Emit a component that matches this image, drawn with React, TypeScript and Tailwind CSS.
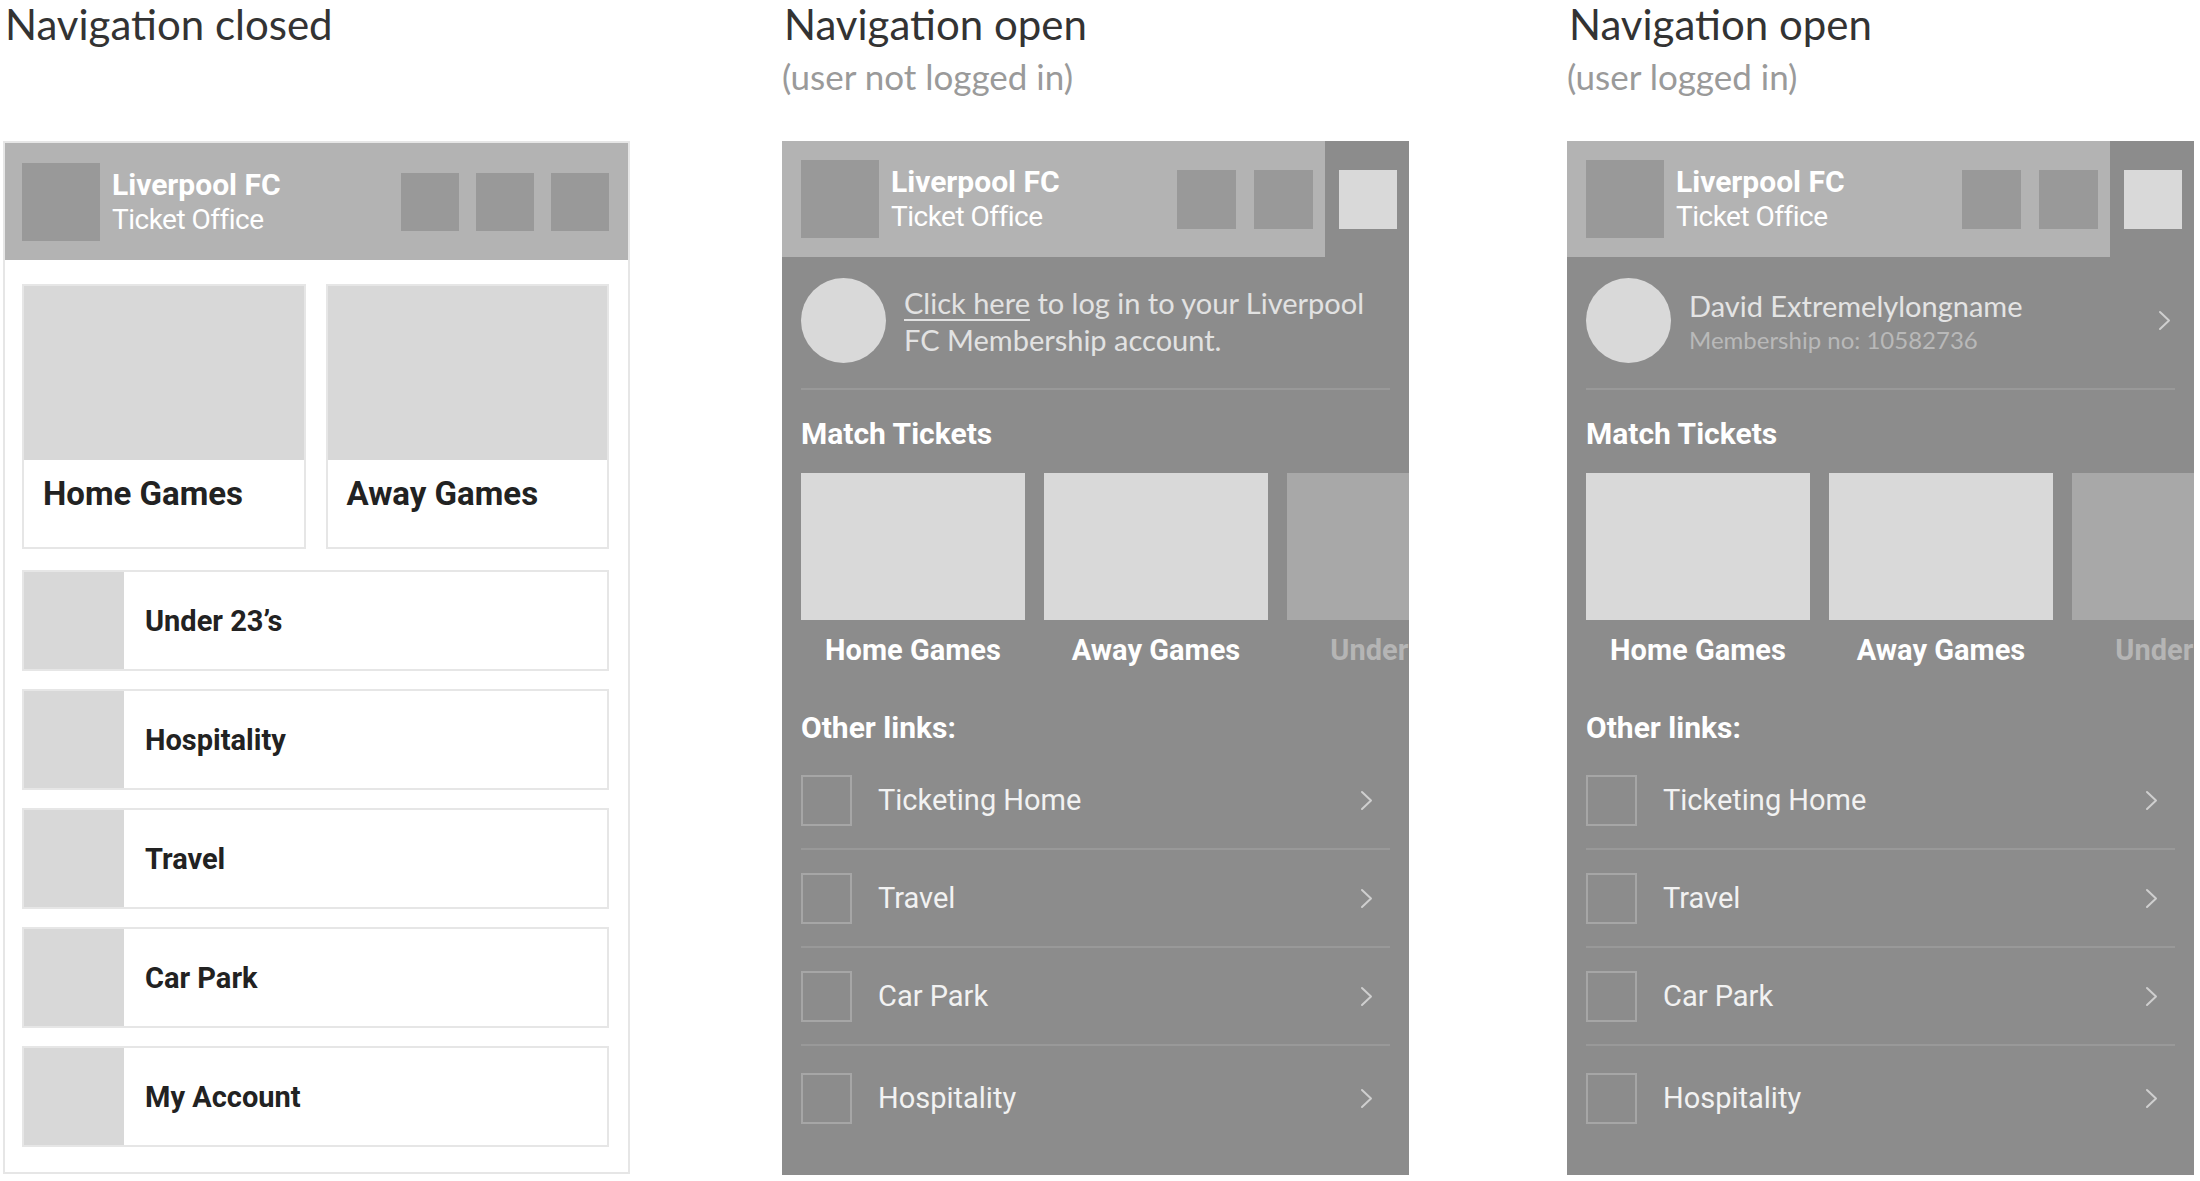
import React from "react";

const quickLinks = ["Under 23’s", "Hospitality", "Travel", "Car Park", "My Account"];
const otherLinks = ["Ticketing Home", "Travel", "Car Park", "Hospitality"];
const matchCards = [
  { label: "Home Games", faded: false },
  { label: "Away Games", faded: false },
  { label: "Under 23’s", faded: true },
];

const ui = "font-['Roboto','Liberation_Sans',sans-serif]";
const soft = "font-['Lato','Noto_Sans',sans-serif]";

const Chevron = () => (
  <svg width="13" height="21" viewBox="0 0 13 21" fill="none" className="text-[#cfcfcf]">
    <path
      d="M2 2l9 8.5L2 19"
      stroke="currentColor"
      strokeWidth="2"
      strokeLinecap="round"
      strokeLinejoin="round"
    />
  </svg>
);

const Title = ({ title, sub }: { title: string; sub?: string }) => (
  <div className={`${soft} h-[141px] pt-[3px]`}>
    <div className="text-[42px] leading-none text-[#333] pl-[2px]">{title}</div>
    {sub && <div className="mt-[14px] text-[35px] leading-none text-[#9a9a9a]">{sub}</div>}
  </div>
);

const Brand = () => (
  <>
    <div className="w-[78px] h-[78px] bg-[#999] shrink-0" />
    <div className={`${ui} ml-[12px] text-white leading-[35px]`}>
      <div className="text-[30px] font-bold">Liverpool FC</div>
      <div className="text-[28px] tracking-[-0.5px]">Ticket Office</div>
    </div>
  </>
);

const ClosedPanel = () => (
  <div className="h-[1033px] border-2 border-[#e6e6e6] bg-white">
    <div className="h-[117px] bg-[#b3b3b3] flex items-center pl-[17px] pr-[19px]">
      <Brand />
      <div className="flex-1" />
      <div className="flex gap-[17px]">
        <div className="w-[58px] h-[58px] bg-[#999]" />
        <div className="w-[58px] h-[58px] bg-[#999]" />
        <div className="w-[58px] h-[58px] bg-[#999]" />
      </div>
    </div>
    <div className={`${ui} pl-[17px] pr-[19px] pt-[24px]`}>
      <div className="grid grid-cols-2 gap-[20px]">
        {["Home Games", "Away Games"].map((t) => (
          <div key={t} className="h-[265px] border-2 border-[#e6e6e6] flex flex-col">
            <div className="h-[174px] bg-[#d8d8d8]" />
            <div className="pt-[15px] pl-[19px] text-[33px] leading-[38px] font-bold text-[#222]">{t}</div>
          </div>
        ))}
      </div>
      <div className="mt-[21px] flex flex-col gap-[18px]">
        {quickLinks.map((t) => (
          <div key={t} className="h-[101px] border-2 border-[#e6e6e6] flex items-center">
            <div className="w-[100px] self-stretch bg-[#d8d8d8]" />
            <div className="pl-[21px] text-[29px] leading-[34px] font-bold text-[#222]">{t}</div>
          </div>
        ))}
      </div>
    </div>
  </div>
);

const OpenPanel = ({ loggedIn }: { loggedIn: boolean }) => (
  <div className="h-[1034px] bg-[#8c8c8c] overflow-hidden">
    <div className="h-[116px] flex">
      <div className="w-[543px] bg-[#b3b3b3] flex items-center pl-[19px] pr-[12px]">
        <Brand />
        <div className="flex-1" />
        <div className="flex gap-[18px]">
          <div className="w-[59px] h-[59px] bg-[#999]" />
          <div className="w-[59px] h-[59px] bg-[#999]" />
        </div>
      </div>
      <div className="flex-1 flex items-center pl-[14px]">
        <div className="w-[58px] h-[59px] bg-[#d9d9d9]" />
      </div>
    </div>

    <div className="px-[19px]">
      <div className="pt-[21px] pb-[25px] border-b-2 border-[#999] flex items-center">
        <div className="w-[85px] h-[85px] rounded-full bg-[#d9d9d9] shrink-0" />
        {loggedIn ? (
          <>
            <div className={`${soft} ml-[18px] flex-1`}>
              <div className="text-[29px] leading-[35px] text-[#e4e4e4]">David Extremelylongname</div>
              <div className="mt-[2px] text-[24px] leading-[29px] text-[#b9b9b9]">Membership no: 10582736</div>
            </div>
            <div className="pr-[4px]">
              <Chevron />
            </div>
          </>
        ) : (
          <div className={`${soft} ml-[18px] text-[29px] leading-[37px] text-[#e2e2e2]`}>
            <span className="underline underline-offset-[5px] decoration-[1.5px]">Click here</span> to log in to your Liverpool
            <br />
            FC Membership account.
          </div>
        )}
      </div>

      <div className={`${ui} pt-[26px] text-[30px] leading-[35px] font-bold text-white`}>Match Tickets</div>
      <div className={`${ui} mt-[22px] flex gap-[19px]`}>
        {matchCards.map((c) => (
          <div key={c.label} className="w-[224px] shrink-0 flex flex-col items-center">
            <div className={`w-full h-[147px] ${c.faded ? "bg-[#a8a8a8]" : "bg-[#d9d9d9]"}`} />
            <div
              className={`mt-[13px] text-[29px] leading-[34px] font-bold whitespace-nowrap ${
                c.faded ? "text-[#b5b5b5]" : "text-white"
              }`}
            >
              {c.label}
            </div>
          </div>
        ))}
      </div>

      <div className={`${ui} mt-[43px] text-[30px] leading-[35px] font-bold text-white`}>Other links:</div>
      <div className={`${ui} mt-[7px]`}>
        {otherLinks.map((t, i) => (
          <div
            key={t}
            className={`flex items-center ${
              i < otherLinks.length - 1 ? "h-[98px] border-b-2 border-[#999]" : "h-[104px]"
            }`}
          >
            <div className="w-[51px] h-[51px] border-2 border-[#a6a6a6] shrink-0" />
            <div className="ml-[26px] flex-1 text-[29px] leading-[35px] text-[#f2f2f2]">{t}</div>
            <div className="pr-[17px]">
              <Chevron />
            </div>
          </div>
        ))}
      </div>
    </div>
  </div>
);

const App = () => {
  return (
    <div className="w-[2200px] h-[1181px] bg-white flex items-start overflow-hidden">
      <div className="ml-[3px] w-[627px]">
        <Title title="Navigation closed" />
        <ClosedPanel />
      </div>
      <div className="ml-[152px] w-[627px]">
        <Title title="Navigation open" sub="(user not logged in)" />
        <OpenPanel loggedIn={false} />
      </div>
      <div className="ml-[158px] w-[627px]">
        <Title title="Navigation open" sub="(user logged in)" />
        <OpenPanel loggedIn={true} />
      </div>
    </div>
  );
};

export default App;
